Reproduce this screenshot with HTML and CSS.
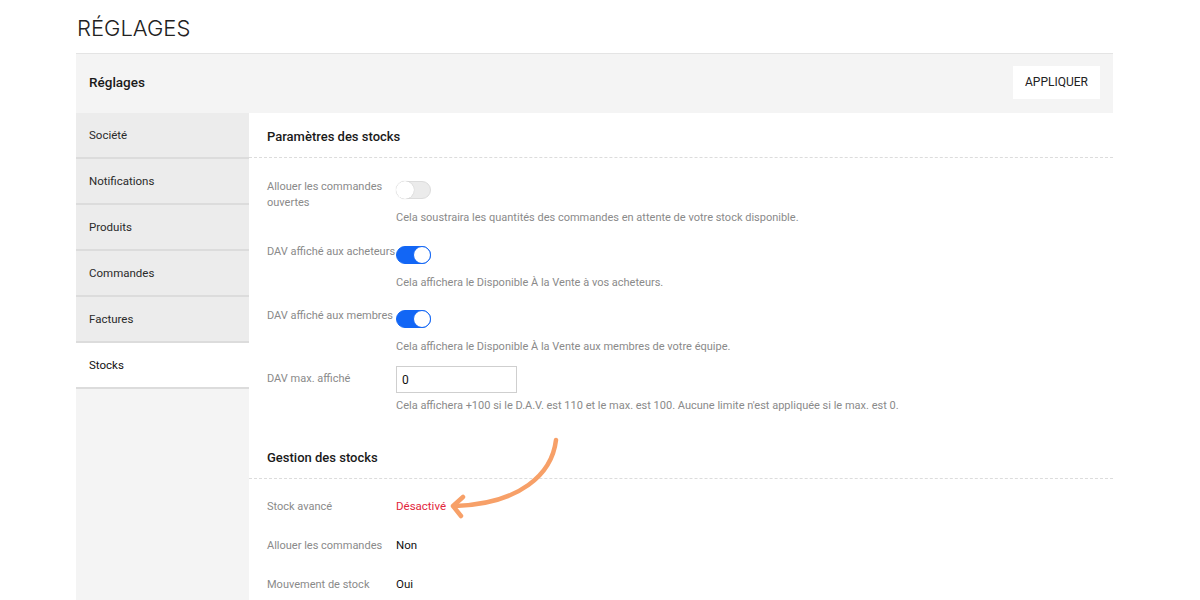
FILE: index.html
```html
<!DOCTYPE html>
<html lang="fr">
<head>
    <meta charset="UTF-8">
    <meta name="viewport" content="width=device-width, initial-scale=1.0">
    <title>Réglages</title>
    <link rel="stylesheet" href="styles.css">
</head>
<body>
    <h1 class="page-title">RÉGLAGES</h1>
    <div class="panel">
        <div class="panel-head">
            <h2>Réglages</h2>
            <button type="button" class="apply">APPLIQUER</button>
        </div>
        <div class="panel-body">
            <nav class="side">
                <a class="side-item">Société</a>
                <a class="side-item">Notifications</a>
                <a class="side-item">Produits</a>
                <a class="side-item">Commandes</a>
                <a class="side-item">Factures</a>
                <a class="side-item active">Stocks</a>
            </nav>
            <main class="content">
                <section class="section">
                    <h3 class="section-title">Paramètres des stocks</h3>
                    <div class="field">
                        <label class="field-label">Allouer les commandes ouvertes</label>
                        <div class="field-control">
                            <span class="toggle"></span>
                            <p class="hint">Cela soustraira les quantités des commandes en attente de votre stock disponible.</p>
                        </div>
                    </div>
                    <div class="field">
                        <label class="field-label nowrap">DAV affiché aux acheteurs</label>
                        <div class="field-control">
                            <span class="toggle on"></span>
                            <p class="hint">Cela affichera le Disponible À la Vente à vos acheteurs.</p>
                        </div>
                    </div>
                    <div class="field tight">
                        <label class="field-label nowrap">DAV affiché aux membres</label>
                        <div class="field-control">
                            <span class="toggle on"></span>
                            <p class="hint">Cela affichera le Disponible À la Vente aux membres de votre équipe.</p>
                        </div>
                    </div>
                    <div class="field field-input">
                        <label class="field-label">DAV max. affiché</label>
                        <div class="field-control">
                            <input type="text" class="text-input" value="0">
                            <p class="hint">Cela affichera +100 si le D.A.V. est 110 et le max. est 100. Aucune limite n'est appliquée si le max. est 0.</p>
                        </div>
                    </div>
                </section>

                <section class="section second">
                    <h3 class="section-title">Gestion des stocks</h3>
                    <div class="info-list">
                        <div class="info-row">
                            <span class="info-label">Stock avancé</span>
                            <span class="info-value off">Désactivé</span>
                        </div>
                        <div class="info-row">
                            <span class="info-label">Allouer les commandes</span>
                            <span class="info-value">Non</span>
                        </div>
                        <div class="info-row">
                            <span class="info-label">Mouvement de stock</span>
                            <span class="info-value">Oui</span>
                        </div>
                    </div>
                </section>

                <!-- annotation arrow -->
                <svg class="arrow" width="340" height="420" viewBox="0 0 340 420" fill="none" stroke="#f7a068" stroke-width="4.5" stroke-linecap="round" stroke-linejoin="round">
                    <path d="M307 327 C303 361 271 391 206 393"/>
                    <path d="M214 384 L204 393 L212 403"/>
                </svg>
            </main>
        </div>
    </div>
</body>
</html>
```

FILE: styles.css
```css
body {
    font-family: Roboto, "Liberation Sans", Arial, sans-serif;
    background-color: #fff;
    color: #222;
    margin: 0;
    padding: 14px 0 0 76px;
    height: 600px;
    box-sizing: border-box;
    overflow: hidden;
}
.page-title {
    margin: 0 0 11px 1px;
    font-family: Inter, sans-serif;
    font-weight: 300;
    font-size: 22px;
    line-height: 28px;
    color: #222;
}
.panel {
    width: 1037px;
}
.panel-head {
    display: flex;
    align-items: center;
    justify-content: space-between;
    height: 60px;
    padding: 0 13px 3px 13px;
    box-sizing: border-box;
    background-color: #f4f4f4;
    border-top: 1px solid #e4e4e4;
}
.panel-head h2 {
    margin: 0;
    font-size: 13.5px;
    font-weight: 500;
    color: #1a1a1a;
}
.apply {
    width: 87px;
    height: 33px;
    background: #fff;
    border: none;
    font-family: inherit;
    font-size: 12px;
    color: #222;
    padding: 0;
    cursor: pointer;
}
.panel-body {
    display: flex;
    height: 500px;
}
.side {
    width: 173px;
    background-color: #f4f4f4;
    flex-shrink: 0;
}
.side-item {
    display: block;
    height: 44px;
    line-height: 44px;
    padding-left: 13px;
    font-size: 11.5px;
    color: #2a2a2a;
    background-color: #ececec;
    border-bottom: 2px solid #dcdcdc;
}
.side-item.active {
    background-color: #fff;
    color: #111;
}
.content {
    position: relative;
    flex: 1;
    background: #fff;
}
.section-title {
    margin: 0;
    padding: 14px 18px 10px;
    font-size: 13px;
    line-height: 20px;
    font-weight: 500;
    color: #1a1a1a;
    border-bottom: 1px dashed #dcdcdc;
}
.section.second {
    margin-top: 20px;
}
.field {
    display: flex;
    padding-left: 18px;
    margin-top: 18px;
}
.section-title + .field {
    margin-top: 21px;
}
.field.tight {
    margin-top: 17px;
}
.field-input {
    margin-top: 11px;
}
.field-label {
    width: 129px;
    flex-shrink: 0;
    font-size: 11px;
    line-height: 16px;
    color: #8a8a8a;
}
.field-label.nowrap {
    white-space: nowrap;
}
.field-input .field-label {
    padding-top: 5px;
}
.field-control {
    display: flex;
    flex-direction: column;
    align-items: flex-start;
}
.hint {
    margin: 11px 0 0;
    font-size: 11px;
    line-height: 16px;
    color: #8a8a8a;
}
.field-input .hint {
    margin-top: 5px;
}
.toggle {
    position: relative;
    display: block;
    width: 35px;
    height: 18px;
    margin-top: 2px;
    border-radius: 10px;
    background-color: #ebebeb;
    border: 1px solid #dcdcdc;
    box-sizing: border-box;
}
.toggle::after {
    content: "";
    position: absolute;
    top: -1px;
    left: -1px;
    width: 18px;
    height: 18px;
    border-radius: 50%;
    background: #fff;
    box-shadow: 0 0 1px rgba(0, 0, 0, 0.25);
}
.toggle.on {
    background-color: #1266f5;
    border-color: #1266f5;
}
.toggle.on::after {
    left: auto;
    right: -1px;
    border: 1.5px solid #1266f5;
    box-sizing: border-box;
    box-shadow: none;
}
.text-input {
    width: 121px;
    height: 27px;
    box-sizing: border-box;
    border: 1px solid #cfcfcf;
    padding: 0 5px;
    font-family: inherit;
    font-size: 12px;
    color: #111;
}
.info-list {
    padding: 8px 0 0 18px;
}
.info-row {
    display: flex;
    height: 39px;
    line-height: 39px;
    font-size: 11px;
}
.info-label {
    width: 129px;
    color: #8a8a8a;
}
.info-value {
    color: #111;
    font-size: 11.5px;
}
.info-value.off {
    color: #e2263c;
}
.arrow {
    position: absolute;
    left: 0;
    top: 0;
    pointer-events: none;
}
```
